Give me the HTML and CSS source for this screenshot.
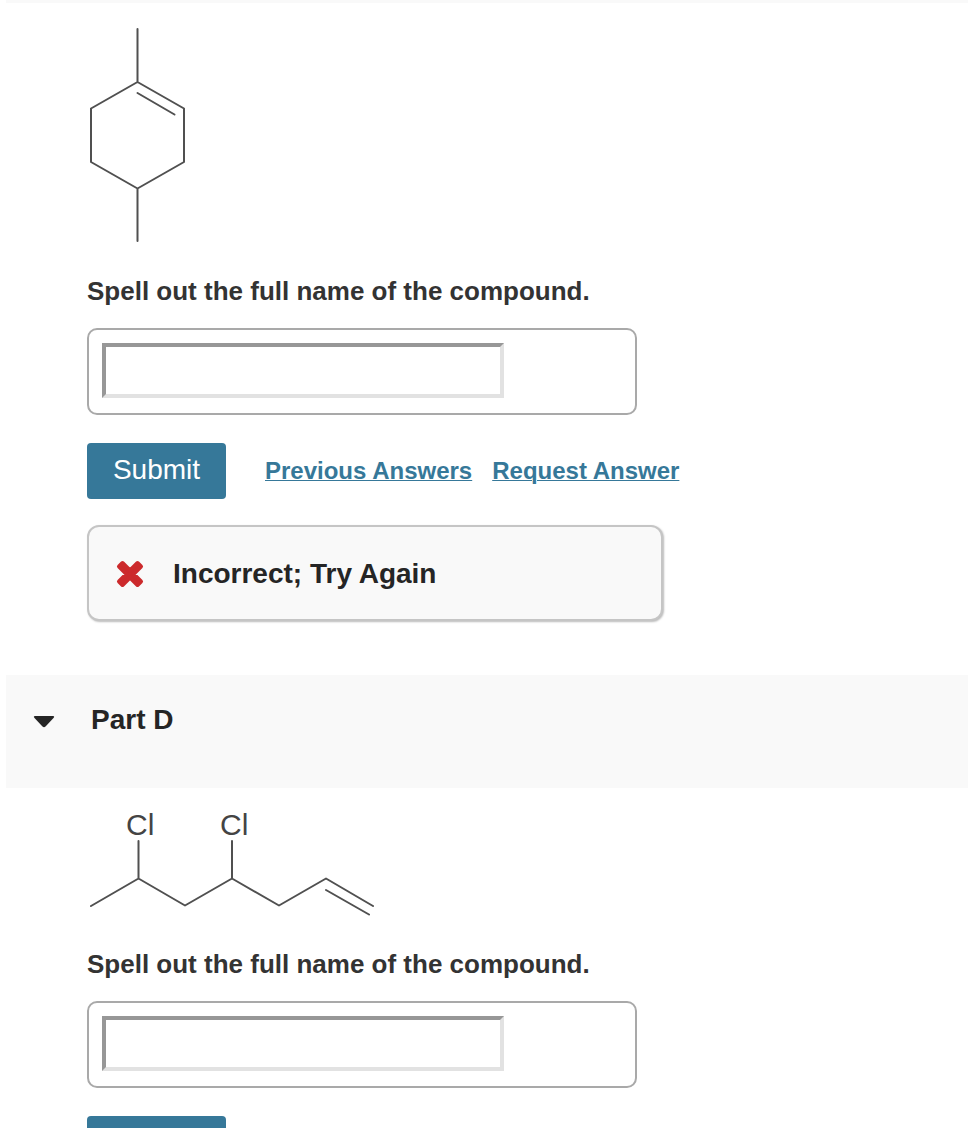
FILE: index.html
```html
<!DOCTYPE html>
<html lang="en">
  <head>
    <meta charset="utf-8">
    <title>Naming Compounds</title>
    <link rel="stylesheet" href="styles.css">
  </head>
  <body>
    <main class="assignment">
      <section class="part">
        <div class="part-header part-header-end"></div>
        <div class="part-body">
          <svg class="structure" width="120" height="230" viewBox="0 0 120 230" role="img" aria-label="Skeletal structure of a six-membered ring">
            <path d="M50.5 8V61L97 87.500V141L50.500 167.500L4 141V87.500L50.500 61M50.500 167.500V220M50.500 72L87.500 93.500" />
          </svg>
          <label class="prompt" for="answer-c">Spell out the full name of the compound.</label>
          <div class="answer-box">
            <input class="answer" id="answer-c" type="text">
          </div>
          <div class="actions">
            <button class="submit" type="button">Submit</button>
            <a href="#previous">Previous Answers</a>
            <a href="#request">Request Answer</a>
          </div>
          <div class="feedback">
            <svg class="cross" width="28" height="28" viewBox="0 0 28 28" aria-hidden="true">
              <path d="M6.500 3L14 10.500L21.500 3L25 6.500L17.500 14L25 21.500L21.500 25L14 17.500L6.500 25L3 21.500L10.500 14L3 6.500Z" />
            </svg>
            <span>Incorrect; Try Again</span>
          </div>
        </div>
      </section>

      <section class="part">
        <div class="part-header">
          <svg class="arrow" width="22" height="12" viewBox="0 0 22 12" aria-hidden="true">
            <path d="M2 0H20Q22 0 20.500 2L12.500 10.500Q11 12 9.500 10.500L1.500 2Q0 0 2 0Z" />
          </svg>
          <h2>Part D</h2>
        </div>
        <div class="part-body">
          <svg class="structure" width="300" height="118" viewBox="0 0 300 118" role="img" aria-label="Skeletal structure of a chain with two chlorines">
            <path d="M4 100L51.500 72.500L98 99.500L145 72.500L192 99.500L239 72.500L286 100M51.500 72.500V35M145 72.500V35M239 84L282 108.500" />
            <text x="39" y="29">Cl</text>
            <text x="133" y="29">Cl</text>
          </svg>
          <label class="prompt" for="answer-d">Spell out the full name of the compound.</label>
          <div class="answer-box">
            <input class="answer" id="answer-d" type="text">
          </div>
          <div class="actions">
            <button class="submit" type="button">Submit</button>
          </div>
        </div>
      </section>
    </main>
  </body>
</html>
```
FILE: styles.css
```css
* {
  box-sizing: border-box;
}

body {
  margin: 0;
  font-family: "Liberation Sans", Arial, sans-serif;
  color: #252525;
  background-color: #fff;
}

.assignment {
  height: 100vh;
  overflow: hidden;
  padding-left: 6px;
}

.part-header {
  display: flex;
  align-items: flex-start;
  gap: 36px;
  padding: 29px 27px 52px;
  background-color: #f9f9f9;
}

.part-header-end {
  padding: 0 0 3px;
}

.part-header h2 {
  margin: 0;
  font-size: 28px;
  line-height: 32px;
}

.arrow {
  margin-top: 12px;
  fill: #252525;
}

.part-body {
  padding: 18px 24px 54px 81px;
}

.structure {
  display: block;
  fill: none;
  stroke: #505050;
  stroke-width: 2;
  stroke-linecap: round;
  stroke-linejoin: round;
}

.structure text {
  font-size: 30px;
  fill: #444;
  stroke: none;
}

.prompt {
  display: block;
  margin: 24px 0 21px;
  font-size: 26px;
  font-weight: bold;
  line-height: 32px;
  color: #333;
}

.answer-box {
  display: flex;
  max-width: 550px;
  padding: 13px 13px 15px;
  border: 2px solid #a9a9a9;
  border-radius: 10px;
}

.answer {
  width: 402px;
  height: 55px;
  padding: 4px 8px;
  border: 4px solid;
  border-color: #979797 #e2e2e2 #e2e2e2 #979797;
  font-family: inherit;
  font-size: 26px;
  background-color: #fff;
}

.actions {
  display: flex;
  align-items: center;
  gap: 20px;
  margin-top: 28px;
}

.submit {
  width: 139px;
  height: 56px;
  margin-right: 19px;
  padding: 0 0 2px;
  border: none;
  border-radius: 4px;
  font-family: inherit;
  font-size: 28px;
  color: #fff;
  background-color: #367899;
  cursor: pointer;
}

.actions a {
  font-size: 24px;
  font-weight: bold;
  line-height: 28px;
  color: #367899;
  text-decoration-thickness: 1px;
}

.feedback {
  display: flex;
  align-items: center;
  gap: 29px;
  max-width: 576px;
  height: 96px;
  margin-top: 26px;
  padding: 1px 27px 0;
  border: 2px solid #c5c5c5;
  border-radius: 12px;
  font-size: 28px;
  font-weight: bold;
  background-color: #f9f9f9;
  box-shadow: 1px 1px 2px #bbb;
}

.cross {
  fill: #cc2a2c;
  stroke: #cc2a2c;
  stroke-width: 4;
  stroke-linejoin: round;
}
```
